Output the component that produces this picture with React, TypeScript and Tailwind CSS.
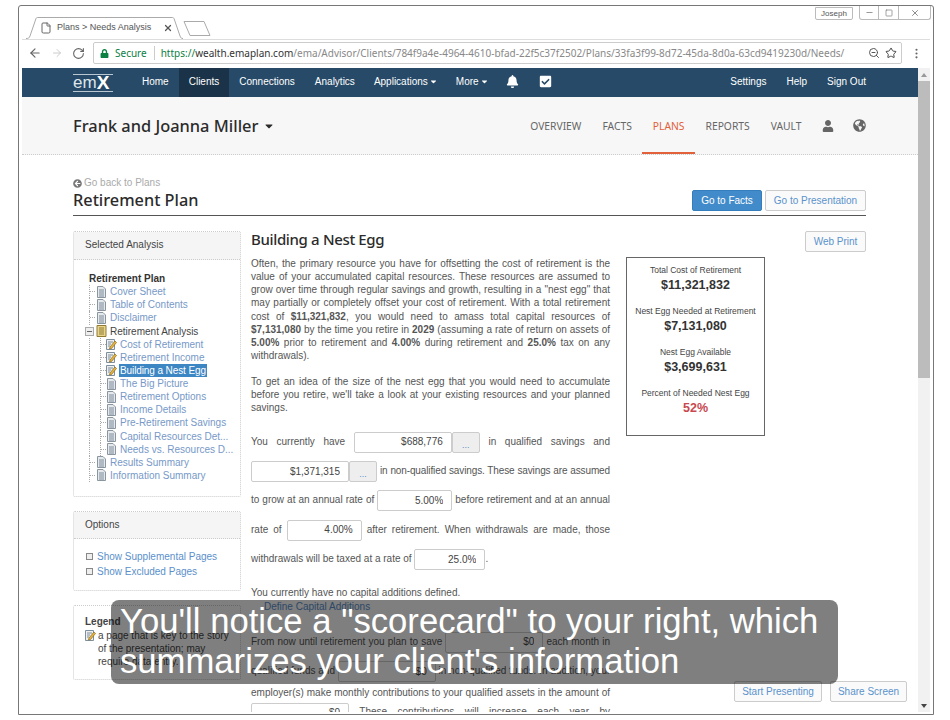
import React from 'react';
import { ArrowLeft, ArrowRight, RotateCw, ZoomOut, Star, MoreVertical, File, X, Minus, Square } from 'lucide-react';
import { FaLock, FaBell, FaCheckSquare, FaUser, FaGlobeAmericas, FaArrowCircleLeft, FaCaretDown } from 'react-icons/fa';

const sans = 'font-["Liberation_Sans",Arial,sans-serif]';
const head = 'font-["Noto_Sans",sans-serif]';

const DocIcon = () => (
  <svg width="11" height="12" viewBox="0 0 11 12" className="shrink-0">
    <path d="M1.5.5h5.5l2.5 2.5v8.5h-8z" fill="#e6e9ec" stroke="#8a969f" />
    <path d="M3 4h5M3 6h5M3 8h5M3 10h5" stroke="#7b8a99" />
  </svg>
);

const KeyIcon = () => (
  <svg width="11" height="12" viewBox="0 0 11 12" className="shrink-0">
    <path d="M.5 1.5h8v10h-8z" fill="#eee" stroke="#7d8e9c" />
    <path d="M2 4h5M2 6h3M2 8h2" stroke="#7d8e9c" />
    <path d="M4 9l5-6 1.5 1.5-5 6-2 .5z" fill="#e9b53c" stroke="#8a6a1c" strokeWidth=".7" />
  </svg>
);

const BookIcon = () => (
  <svg width="11" height="12" viewBox="0 0 11 12" className="shrink-0">
    <path d="M1 .5h9v11H1z" fill="#e8d48a" stroke="#8f7a36" />
    <path d="M3 3h5M3 5h5M3 7h5M3 9h5" stroke="#8f7a36" />
  </svg>
);

const MinusBox = () => (
  <svg width="9" height="9" viewBox="0 0 9 9" className="shrink-0">
    <rect x=".5" y=".5" width="8" height="8" fill="#eee" stroke="#aaa" />
    <path d="M2 4.5h5" stroke="#666" />
  </svg>
);

const links = ['Home', 'Clients', 'Connections', 'Analytics'];

const TopNav = () => (
  <div className={`h-[29px] bg-[#264a67] flex items-center text-[10px] text-white ${sans}`}>
    <div className="ml-[51px] w-[40px] h-[18px] border-y border-[#b9c7d2] flex items-center leading-none">
      <span className="text-[17px] font-light text-[#dfe6ec]">em</span>
      <span className="text-[19px] font-bold">X</span>
    </div>
    <div className="ml-[19px] flex h-full">
      {links.map((l) => (
        <a key={l} className={`flex items-center px-[10px] pb-[2px] ${l === 'Clients' ? 'bg-[#1a3348]' : ''}`}>{l}</a>
      ))}
      <a className="flex items-center gap-[1px] pl-[9px] pr-[10px] pb-[2px]">Applications <FaCaretDown size={9} /></a>
      <a className="flex items-center gap-[1px] pl-[8px] pr-[10px] pb-[2px]">More <FaCaretDown size={9} /></a>
    </div>
    <FaBell size={13} className="ml-[7px] mb-[2px]" />
    <FaCheckSquare size={13} className="ml-[20px] mb-[2px]" />
    <div className="ml-auto mr-[52px] flex gap-[20px] pb-[2px]">
      <a>Settings</a>
      <a>Help</a>
      <a>Sign Out</a>
    </div>
  </div>
);

const tabs = ['OVERVIEW', 'FACTS', 'PLANS', 'REPORTS', 'VAULT'];

const SubHeader = () => (
  <div className="h-[58px] bg-[#f7f7f7] border-b border-dotted border-[#ccc] flex items-center pl-[51px] pr-[52px]">
    <div className={`${head} text-[16.4px] font-medium text-[#2b2b2b] flex items-center gap-[5px] mt-[2px]`}>
      Frank and Joanna Miller <FaCaretDown size={12} />
    </div>
    <div className={`ml-auto flex h-full items-center ${head} text-[10.3px] text-[#666]`}>
      {tabs.map((t) => (
        <a
          key={t}
          className={`h-full flex items-center px-[10.5px] pt-[2px] border-y-2 border-t-transparent ${
            t === 'PLANS' ? 'text-[#e2603a] border-b-[#e2603a]' : 'border-b-transparent'
          }`}
        >
          {t}
        </a>
      ))}
      <FaUser size={12} className="ml-[10px] text-[#666]" />
      <FaGlobeAmericas size={13} className="ml-[19px] text-[#666]" />
    </div>
  </div>
);

const Btn = ({ children, w }: { children: React.ReactNode; w: string }) => (
  <button className={`${w} h-[21px] bg-[#fafafa] border border-[#ccc] rounded-[2px] text-[10px] text-[#5b93cc]`}>
    {children}
  </button>
);

const PanelHead = ({ title, h }: { title: string; h: string }) => (
  <div className={`${h} bg-[#f5f5f5] border-b border-dotted border-[#ccc] flex items-center px-[11px] pb-[2px] text-[10px] text-[#444]`}>
    {title}
  </div>
);

const tree = [
  { label: 'Cover Sheet', icon: 'doc', lvl: 1 },
  { label: 'Table of Contents', icon: 'doc', lvl: 1 },
  { label: 'Disclaimer', icon: 'doc', lvl: 1 },
  { label: 'Retirement Analysis', icon: 'book', lvl: 1 },
  { label: 'Cost of Retirement', icon: 'key', lvl: 2 },
  { label: 'Retirement Income', icon: 'key', lvl: 2 },
  { label: 'Building a Nest Egg', icon: 'key', lvl: 2 },
  { label: 'The Big Picture', icon: 'doc', lvl: 2 },
  { label: 'Retirement Options', icon: 'doc', lvl: 2 },
  { label: 'Income Details', icon: 'doc', lvl: 2 },
  { label: 'Pre-Retirement Savings', icon: 'doc', lvl: 2 },
  { label: 'Capital Resources Det...', icon: 'doc', lvl: 2 },
  { label: 'Needs vs. Resources D...', icon: 'doc', lvl: 2 },
  { label: 'Results Summary', icon: 'doc', lvl: 1 },
  { label: 'Information Summary', icon: 'doc', lvl: 1 },
];

// dotted tree connector: vertical rule with a tick running to the icon
const Tick = () => (
  <span className="w-[6px] h-full shrink-0 border-l border-dotted border-[#aaa] flex items-center">
    <span className="w-full border-t border-dotted border-[#aaa]" />
  </span>
);

const Sidebar = () => (
  <div className={`w-[168px] shrink-0 flex flex-col gap-[14px] ${sans}`}>
    <div className="h-[266px] border border-dotted border-[#ccc] rounded-[2px]">
      <PanelHead title="Selected Analysis" h="h-[28px]" />
      <div className="pt-[12px] pl-[11px] text-[10px] leading-[13.14px]">
        <div className="pl-[4px] font-semibold text-[#333]">Retirement Plan</div>
        {tree.map((t) => (
          <div key={t.label} className="flex items-center h-[13.14px]">
            {t.label === 'Retirement Analysis' ? (
              <span className="w-[11px] shrink-0"><MinusBox /></span>
            ) : (
              <span className="flex h-full w-[11px] shrink-0 pl-[4px]">
                {t.lvl === 1 ? <Tick /> : <span className="h-full border-l border-dotted border-[#aaa]" />}
              </span>
            )}
            {t.lvl === 2 && (
              <span className="flex h-full w-[10px] shrink-0 pl-[4px]"><Tick /></span>
            )}
            {t.icon === 'doc' && <DocIcon />}
            {t.icon === 'book' && <BookIcon />}
            {t.icon === 'key' && <KeyIcon />}
            <span
              className={`whitespace-nowrap ${
                t.label === 'Building a Nest Egg'
                  ? 'bg-[#3c86c4] text-white ml-[2px] px-[1px] tracking-[-0.1px]'
                  : t.label === 'Retirement Analysis'
                    ? 'ml-[3px] text-[#444]'
                    : 'ml-[3px] text-[#7799c8]'
              }`}
            >
              {t.label}
            </span>
          </div>
        ))}
      </div>
    </div>
    <div className="h-[80px] border border-dotted border-[#ccc] rounded-[2px]">
      <PanelHead title="Options" h="h-[27px]" />
      <div className="pt-[10px] pl-[12px] text-[10px] leading-[15px] text-[#5b8fcb]">
        {['Show Supplemental Pages', 'Show Excluded Pages'].map((o) => (
          <div key={o} className="flex items-center gap-[4px]">
            <span className="w-[7px] h-[7px] border border-[#888] bg-[#eee]" />
            {o}
          </div>
        ))}
      </div>
    </div>
    <div className="h-[75px] border border-dotted border-[#ccc] rounded-[2px] pt-[9px] pl-[11px] text-[10px] leading-[13.14px] text-[#444]">
      <div className="font-semibold mb-[1px]">Legend</div>
      <div className="flex gap-[2px]">
        <KeyIcon />
        <div className="w-[132px]">a page that is key to the story of the presentation; may require data entry.</div>
      </div>
    </div>
  </div>
);

const Field = ({ value, w }: { value: string; w: string }) => (
  <input
    readOnly
    value={value}
    className={`${w} inline-block h-[21px] my-[4.2px] align-middle border border-[#ccc] rounded-[2px] bg-white px-[8px] text-right [text-align-last:right] text-[10px] text-[#444] ${sans}`}
  />
);

const Dots = () => (
  <span className="inline-block w-[28px] h-[21px] my-[4.2px] align-middle border border-[#ccc] rounded-[2px] bg-[#eee] text-center [text-align-last:center] text-[9px] leading-[24px] text-[#5b8fcb]">
    ...
  </span>
);

const Line = ({ children }: { children: React.ReactNode }) => (
  <div className="whitespace-nowrap leading-[22px] [text-align-last:justify]">{children}</div>
);

const score = [
  { label: 'Total Cost of Retirement', value: '$11,321,832' },
  { label: 'Nest Egg Needed at Retirement', value: '$7,131,080' },
  { label: 'Nest Egg Available', value: '$3,699,631' },
];

const Scorecard = () => (
  <div className={`w-[139px] h-[179px] shrink-0 border border-[#666] pt-[7px] text-center ${sans}`}>
    {score.map((s) => (
      <div key={s.label} className="h-[41px]">
        <div className="text-[8.5px] leading-[11px] text-[#444]">{s.label}</div>
        <div className="text-[12.5px] leading-[18px] font-bold text-[#333]">{s.value}</div>
      </div>
    ))}
    <div className="text-[8.5px] leading-[11px] text-[#444]">Percent of Needed Nest Egg</div>
    <div className="text-[12.5px] leading-[18px] font-bold text-[#c8494f]">52%</div>
  </div>
);

const Content = () => (
  <div className={`w-[359px] shrink-0 text-[10px] text-[#555] ${sans}`}>
    <h2 className={`${head} text-[15px] tracking-[-0.35px] font-medium leading-[20px] text-[#2b2b2b] -mt-[2px] mb-[8px]`}>Building a Nest Egg</h2>
    <p className="text-justify leading-[13.14px] mb-[13px]">
      Often, the primary resource you have for offsetting the cost of retirement is the value of your accumulated
      capital resources. These resources are assumed to grow over time through regular savings and growth, resulting
      in a "nest egg" that may partially or completely offset your cost of retirement. With a total retirement cost of{' '}
      <b>$11,321,832</b>, you would need to amass total capital resources of <b>$7,131,080</b> by the time you retire
      in <b>2029</b> (assuming a rate of return on assets of <b>5.00%</b> prior to retirement and <b>4.00%</b> during
      retirement and <b>25.0%</b> tax on any withdrawals).
    </p>
    <p className="text-justify leading-[13.14px] mb-[13px]">
      To get an idea of the size of the nest egg that you would need to accumulate before you retire, we'll take a look
      at your existing resources and your planned savings.
    </p>
    <Line>You currently have <Field value="$688,776" w="w-[98px]" /><Dots /> in qualified savings and</Line>
    <Line>
      <Field value="$1,371,315" w="w-[98px]" /><Dots /> <span className="tracking-[-0.12px]">in non-qualified savings. These savings are assumed</span>
    </Line>
    <Line>to grow at an annual rate of <Field value="5.00%" w="w-[75px]" /> before retirement and at an annual</Line>
    <Line>rate of <Field value="4.00%" w="w-[75px]" /> after retirement. When withdrawals are made, those</Line>
    <div className="whitespace-nowrap leading-[22px]">
      withdrawals will be taxed at a rate of <Field value="25.0%" w="w-[71px]" />.
    </div>
    <p className="leading-[13.14px] mt-[12px]">You currently have no capital additions defined.</p>
    <p className="leading-[13.14px] pl-[13px] text-[#5b8fcb]">Define Capital Additions</p>
    <div className="mt-[15px]">
      <Line>From now until retirement you plan to save <Field value="$0" w="w-[98px]" /> each month in</Line>
      <Line>qualified funds and <Field value="$0" w="w-[98px]" /> in non-qualified funds. In addition, your</Line>
      <div className="-mt-[4px]">
        <Line>employer(s) make monthly contributions to your qualified assets in the amount of</Line>
      </div>
      <div className="-mt-[6px]">
        <Line><Field value="$0" w="w-[98px]" /> These contributions will increase each year by</Line>
      </div>
    </div>
  </div>
);

const Scrollbar = () => (
  <div className="w-[12px] shrink-0 bg-[#f1f1f1] flex flex-col items-center">
    <div className="h-[13px] w-full flex items-center justify-center">
      <span className="border-x-[3px] border-x-transparent border-b-[4px] border-b-[#999]" />
    </div>
    <div className="w-full h-[297px] bg-[#bcbcbc]" />
    <div className="mt-auto h-[13px] w-full flex items-center justify-center">
      <span className="border-x-[3px] border-x-transparent border-t-[4px] border-t-[#444]" />
    </div>
  </div>
);

const Chrome = () => (
  <>
    <div className="h-[33px] relative flex items-end pl-[4px]">
      <div className={`relative w-[157px] h-[22px] flex items-center gap-[5px] pl-[14px] text-[9px] text-[#555] ${sans}`}>
        <svg width="157" height="22" className="absolute left-0 top-0">
          <path d="M0 21.5C3 21.5 3 21 4 19L10 1.5C10.5 .5 11 .5 12 .5H146C147 .5 147.500 .5 148 1.500L154 19C155 21 155 21.500 157 21.500" fill="white" stroke="#aaa" />
        </svg>
        <File size={12} className="relative text-[#666]" />
        <span className="relative whitespace-nowrap">Plans &gt; Needs Analysis</span>
        <X size={10} className="relative ml-[7px] text-[#555]" strokeWidth={3} />
      </div>
      <svg width="28" height="15" className="mb-[3px]">
        <path d="M1 .5H21L27 14.5H7z" fill="white" stroke="#aaa" />
      </svg>
      <div className={`absolute left-[793px] top-[1px] w-[38px] h-[13px] border border-[#bbb] rounded-b-[2px] text-center text-[8px] leading-[12px] text-[#555] ${sans}`}>
        Joseph
      </div>
      <div className="absolute left-[837px] top-[0px] w-[72px] h-[14px] border border-t-0 border-[#bbb] rounded-b-[3px] flex text-[#777]">
        <span className="w-[19px] border-r border-[#bbb] flex items-center justify-center"><Minus size={9} /></span>
        <span className="w-[20px] border-r border-[#bbb] flex items-center justify-center"><Square size={8} /></span>
        <span className="flex-1 flex items-center justify-center"><X size={10} /></span>
      </div>
    </div>
    <div className={`h-[29px] flex items-center pb-[2px] border-t border-[#ddd] ${head}`}>
      <ArrowLeft size={14} className="ml-[6px] text-[#666]" />
      <ArrowRight size={12} className="ml-[9px] text-[#ccc]" />
      <RotateCw size={13} className="ml-[9px] text-[#666]" />
      <div className="ml-[8px] w-[809px] h-[22px] border border-[#ccc] rounded-[2px] flex items-center text-[10px] overflow-hidden">
        <FaLock size={9} className="ml-[6px] shrink-0 text-[#0b8043]" />
        <span className="ml-[6px] text-[#0b8043]">Secure</span>
        <span className="ml-[7px] w-px h-[14px] bg-[#ccc] shrink-0" />
        <div className="ml-[6px] w-[702px] shrink-0 overflow-hidden whitespace-nowrap text-[#888]">
          <span className="text-[#0b8043]">https://</span>
          <span className="text-[#333]">wealth.emaplan.com</span>
          /ema/Advisor/Clients/784f9a4e-4964-4610-bfad-22f5c37f2502/Plans/33fa3f99-8d72-45da-8d0a-63cd9419230d/Needs/
        </div>
        <ZoomOut size={12} className="ml-[5px] shrink-0 text-[#555]" />
        <Star size={12} className="ml-[5px] shrink-0 text-[#444]" />
      </div>
      <MoreVertical size={13} className="ml-[8px] text-[#666]" />
    </div>
  </>
);

export default function App() {
  return (
    <div className="w-[950px] h-[720px] bg-white overflow-hidden pt-[5px] pl-[18px]">
      <div className="relative w-[916px] h-[710px] border border-[#777] rounded-t-[3px] pl-[3px] pr-[3px] pb-[2px] flex flex-col overflow-hidden">
        <Chrome />
        <div className="flex-1 flex min-h-0">
          <div className="flex-1 min-w-0 overflow-hidden">
            <TopNav />
            <SubHeader />
            <div className="pt-[20px] pl-[51px] pr-[52px]">
              <div className={`h-[41px] border-b border-[#555] flex items-end pb-[4px] ${sans}`}>
                <div>
                  <div className="flex items-center gap-[2px] text-[10px] leading-[12px] text-[#aaa]">
                    <FaArrowCircleLeft size={9} className="text-[#777]" /> Go back to Plans
                  </div>
                  <div className={`${head} text-[16.3px] font-medium leading-[22px] text-[#2b2b2b]`}>Retirement Plan</div>
                </div>
                <div className="ml-auto flex gap-[3px]">
                  <button className="w-[70px] h-[21px] bg-[#428bca] border border-[#357ebd] rounded-[2px] text-[10px] text-white">Go to Facts</button>
                  <Btn w="w-[101px]">Go to Presentation</Btn>
                </div>
              </div>
              <div className="flex gap-[10px] pt-[15px]">
                <Sidebar />
                <Content />
                <div className="relative flex-1 pt-[26px] pl-[6px]">
                  <Scorecard />
                  <div className={`absolute right-0 top-0 flex ${sans}`}>
                    <Btn w="w-[61px]">Web Print</Btn>
                  </div>
                </div>
              </div>
            </div>
          </div>
          <Scrollbar />
        </div>
        <div className={`absolute left-[715px] top-[675px] flex gap-[8px] ${sans}`}>
          <Btn w="w-[88px]">Start Presenting</Btn>
          <Btn w="w-[77px]">Share Screen</Btn>
        </div>
      </div>
      <div className={`absolute left-[111px] top-[600px] w-[727px] h-[84px] rounded-[8px] bg-black/50 pl-[9px] pt-[1px] text-[34.67px] leading-[40px] text-white ${sans}`}>
        You'll notice a "scorecard" to your right, which summarizes your client's information
      </div>
    </div>
  );
}
